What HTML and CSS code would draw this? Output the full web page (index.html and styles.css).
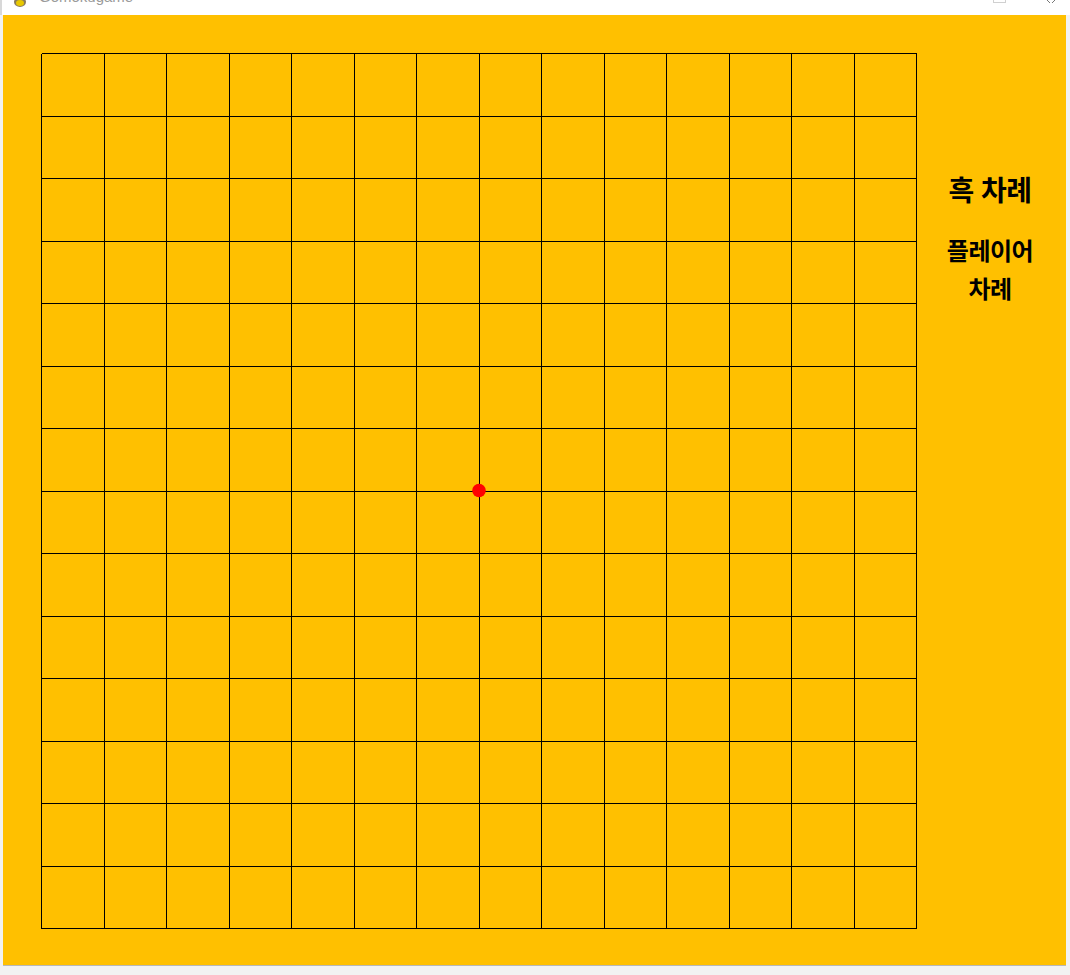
FILE: index.html
```html
<!DOCTYPE html>
<html lang="ko">
<head>
<meta charset="utf-8">
<title>오목</title>
<link rel="stylesheet" href="styles.css">
</head>
<body>
<div class="titlebar">
  <svg class="app-icon" width="14" height="10" viewBox="0 0 14 10">
    <ellipse cx="7" cy="2" rx="6" ry="5" fill="#8a7a5a"/>
    <ellipse cx="7" cy="3" rx="4" ry="3" fill="#e8c800"/>
  </svg>
  <span class="title-text">Gomokugame</span>
  <span class="title-controls">
    <span class="ctl-min"></span>
    <svg class="ctl-close" width="10" height="5" viewBox="0 0 10 5">
      <path d="M1 0 L4 3 M9 0 L6 3" stroke="#777" stroke-width="1" fill="none"/>
    </svg>
  </span>
</div>
<div class="client">
  <div class="board">
    <svg width="877" height="877" viewBox="0 0 877 877" shape-rendering="crispEdges">
      <g stroke="#000" stroke-width="1" fill="none">
        <line x1="0.5" y1="0.5" x2="0.5" y2="875.5"/>
        <line x1="63" y1="0.5" x2="63" y2="875.5"/>
        <line x1="125.5" y1="0.5" x2="125.5" y2="875.5"/>
        <line x1="188" y1="0.5" x2="188" y2="875.5"/>
        <line x1="250.5" y1="0.5" x2="250.5" y2="875.5"/>
        <line x1="313" y1="0.5" x2="313" y2="875.5"/>
        <line x1="375.5" y1="0.5" x2="375.5" y2="875.5"/>
        <line x1="438" y1="0.5" x2="438" y2="875.5"/>
        <line x1="500.5" y1="0.5" x2="500.5" y2="875.5"/>
        <line x1="563" y1="0.5" x2="563" y2="875.5"/>
        <line x1="625.5" y1="0.5" x2="625.5" y2="875.5"/>
        <line x1="688" y1="0.5" x2="688" y2="875.5"/>
        <line x1="750.5" y1="0.5" x2="750.5" y2="875.5"/>
        <line x1="813" y1="0.5" x2="813" y2="875.5"/>
        <line x1="875.5" y1="0.5" x2="875.5" y2="875.5"/>
        <line y1="0.5" x1="0.5" y2="0.5" x2="875.5"/>
        <line y1="63" x1="0.5" y2="63" x2="875.5"/>
        <line y1="125.5" x1="0.5" y2="125.5" x2="875.5"/>
        <line y1="188" x1="0.5" y2="188" x2="875.5"/>
        <line y1="250.5" x1="0.5" y2="250.5" x2="875.5"/>
        <line y1="313" x1="0.5" y2="313" x2="875.5"/>
        <line y1="375.5" x1="0.5" y2="375.5" x2="875.5"/>
        <line y1="438" x1="0.5" y2="438" x2="875.5"/>
        <line y1="500.5" x1="0.5" y2="500.5" x2="875.5"/>
        <line y1="563" x1="0.5" y2="563" x2="875.5"/>
        <line y1="625.5" x1="0.5" y2="625.5" x2="875.5"/>
        <line y1="688" x1="0.5" y2="688" x2="875.5"/>
        <line y1="750.5" x1="0.5" y2="750.5" x2="875.5"/>
        <line y1="813" x1="0.5" y2="813" x2="875.5"/>
        <line y1="875.5" x1="0.5" y2="875.5" x2="875.5"/>
      </g>
      <circle cx="438" cy="437.5" r="6.8" fill="#ff0000" shape-rendering="geometricPrecision"/>
    </svg>
  </div>
  <div class="side">
    <div class="turn">흑 차례</div>
    <div class="status">플레이어 차례</div>
  </div>
</div>
</body>
</html>
```

FILE: styles.css
```css
html, body {
  margin: 0;
  padding: 0;
}
body {
  background: #f2f2f2;
  width: 1070px;
  height: 975px;
  overflow: hidden;
  font-family: "Noto Sans CJK KR", "Noto Sans", sans-serif;
}
.titlebar {
  height: 15px;
  background: #ffffff;
  display: flex;
  align-items: flex-start;
  overflow: hidden;
  border-left: 2px solid #d8d8d8;
  box-sizing: border-box;
}
.app-icon {
  margin-left: 11px;
  margin-top: 0;
}
.title-text {
  margin-left: 12px;
  margin-top: -12px;
  font-family: "Liberation Sans", sans-serif;
  font-size: 15px;
  line-height: 18px;
  color: #9a9a9a;
}
.title-controls {
  margin-left: auto;
  margin-right: 14px;
  display: flex;
  gap: 40px;
  align-items: flex-start;
}
.ctl-min {
  width: 11px;
  height: 2px;
  border: 1px solid #d0d0d0;
  border-top: none;
}
.ctl-close {
  display: block;
}
.client {
  margin-left: 3px;
  width: 1063px;
  height: 950px;
  background: #ffc000;
  display: flex;
  box-sizing: border-box;
  padding: 38px 0 0 38px;
  box-shadow: 0 1px 0 #b8b8b8;
}
.board svg {
  display: block;
}
.side {
  flex: 1;
  display: flex;
  flex-direction: column;
  align-items: center;
  padding-top: 117px;
  margin-left: -4px;
  color: #000;
}
.turn {
  font-size: 28px;
  font-weight: 700;
  line-height: 38px;
  letter-spacing: -0.5px;
}
.status {
  margin-top: 23px;
  width: 110px;
  text-align: center;
  font-size: 24px;
  font-weight: 700;
  line-height: 38px;
  letter-spacing: -0.5px;
}
```
